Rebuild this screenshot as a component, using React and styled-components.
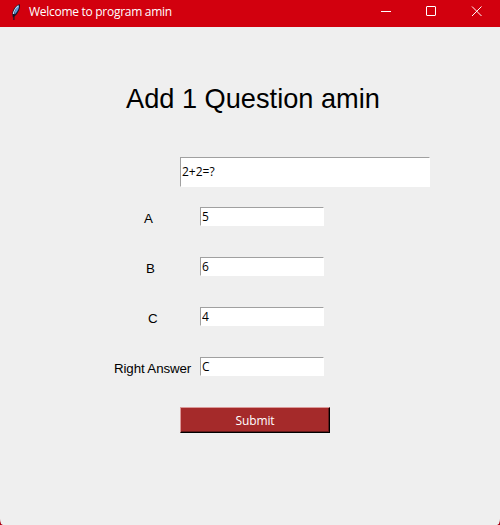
import React from "react";
import styled, { createGlobalStyle } from "styled-components";

const GlobalStyle = createGlobalStyle`
  * { box-sizing: border-box; }
  body { margin: 0; background: #a80012; overflow: hidden; }
`;

const Window = styled.div`
  display: flex;
  flex-direction: column;
  width: 500px;
  height: 525px;
  background: #efefef;
  border-radius: 0 0 3px 3px / 0 0 6px 6px;
  overflow: hidden;
  color: #000;
  font-family: "Open Sans", "Noto Sans", sans-serif;
  font-size: 12px;
`;

const TitleBar = styled.header`
  display: flex;
  align-items: center;
  flex: none;
  height: 27px;
  padding-bottom: 4px;
  background: #d2000e;
  color: #fff;
`;

const Feather = styled.svg`
  width: 12px;
  height: 18px;
  margin-left: 10px;
  flex: none;
`;

const Caption = styled.span`
  margin-left: 7px;
  flex: 1;
  white-space: nowrap;
  letter-spacing: -0.28px;
`;

const WindowButton = styled.button`
  display: grid;
  place-items: center;
  width: 45.5px;
  height: 22px;
  padding: 0;
  border: 0;
  background: transparent;
  color: #fff;
  svg { width: 12px; height: 12px; fill: none; stroke: currentColor; }
`;

const Heading = styled.h1`
  margin: 56px 0 0 126px;
  font: 400 27.2px/32px "Liberation Sans", Arial, sans-serif;
  white-space: nowrap;
`;

const Form = styled.form`
  display: flex;
  flex-direction: column;
  align-items: flex-start;
  padding-top: 42px;
`;

const Entry = styled.input`
  display: block;
  width: ${(p) => (p.$wide ? 250 : 124)}px;
  height: ${(p) => (p.$wide ? 30 : 19)}px;
  margin-left: ${(p) => (p.$wide ? 180 : 0)}px;
  padding: 0 1px ${(p) => (p.$wide ? 2 : 0)}px;
  border: 1px solid #fff;
  border-top-color: #a0a0a0;
  border-left-color: #a0a0a0;
  border-radius: 0;
  outline: 0;
  background: #fff;
  color: #000;
  font: inherit;
`;

const Rows = styled.div`
  display: grid;
  gap: 31px;
  margin-top: 20px;
`;

const Row = styled.div`
  display: grid;
  grid-template-columns: 200px 124px;
  height: 19px;
`;

const Label = styled.label`
  padding: 3px 0 0 ${(p) => p.$indent}px;
  font: 13.33px/17px "Liberation Sans", Arial, sans-serif;
  letter-spacing: -0.12px;
  white-space: nowrap;
`;

const Submit = styled.button`
  width: 150px;
  height: 26px;
  margin: 31px 0 0 180px;
  padding: 0;
  border: 1px solid #000;
  border-top-color: #db9999;
  border-left-color: #db9999;
  border-radius: 0;
  box-shadow: inset -1px -1px #651a1a;
  background: #a52a2a;
  color: #fff;
  font: inherit;
  letter-spacing: -0.1px;
`;

const answers = [
  { id: "a", label: "A", value: "5", indent: 144 },
  { id: "b", label: "B", value: "6", indent: 146 },
  { id: "c", label: "C", value: "4", indent: 148 },
  { id: "right", label: "Right Answer", value: "C", indent: 114 },
];

export default function App() {
  return (
    <>
      <GlobalStyle />
      <Window>
        <TitleBar>
          <Feather viewBox="0 0 12 18">
            <path d="M9.8 1.2 C7 1.5 3 5.5 2.3 10 L2.8 14.5 L5 13 C8.5 9.5 10.5 5 9.8 1.2Z" fill="#101a30" />
            <path d="M9 2.2 C6.5 4 4.9 7 4.2 11.5 L5.2 11 C7.9 8 9.4 5 9 2.2Z" fill="#5d97dc" />
            <path d="M8.4 2.6 C5.6 4.8 3.9 7.5 3.4 11" fill="none" stroke="#c4e2f5" strokeWidth="1.2" />
            <path d="M3.9 11 L3.9 17" fill="none" stroke="#101522" strokeWidth="1.1" />
          </Feather>
          <Caption>Welcome to program amin</Caption>
          <WindowButton aria-label="Minimize">
            <svg viewBox="0 0 12 12"><path d="M1 5.5H11" /></svg>
          </WindowButton>
          <WindowButton aria-label="Maximize">
            <svg viewBox="0 0 12 12"><rect x="0.5" y="0.5" width="9" height="9" rx="0.5" /></svg>
          </WindowButton>
          <WindowButton aria-label="Close">
            <svg viewBox="0 0 12 12"><path d="M1 0.5L10.5 10M10.5 0.5L1 10" /></svg>
          </WindowButton>
        </TitleBar>
        <Heading>Add 1 Question amin</Heading>
        <Form onSubmit={(e) => e.preventDefault()}>
          <Entry $wide aria-label="Question" defaultValue="2+2=?" />
          <Rows>
            {answers.map((a) => (
              <Row key={a.id}>
                <Label htmlFor={a.id} $indent={a.indent}>{a.label}</Label>
                <Entry id={a.id} defaultValue={a.value} />
              </Row>
            ))}
          </Rows>
          <Submit type="submit">Submit</Submit>
        </Form>
      </Window>
    </>
  );
}
